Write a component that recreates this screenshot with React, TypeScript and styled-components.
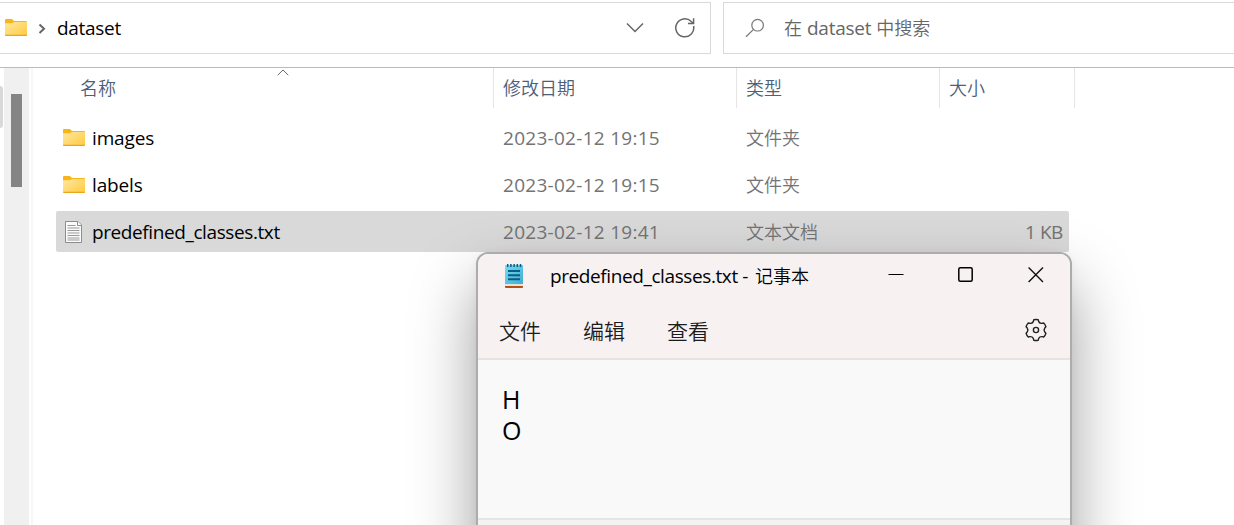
import type { ReactNode } from 'react';
import styled, { createGlobalStyle } from 'styled-components';

const files = [
  { name: 'images', date: '2023-02-12 19:15', type: '文件夹', size: '', folder: true },
  { name: 'labels', date: '2023-02-12 19:15', type: '文件夹', size: '', folder: true },
  { name: 'predefined_classes.txt', date: '2023-02-12 19:41', type: '文本文档', size: '1 KB', folder: false },
];

export default function App() {
  return (
    <>
      <GlobalStyle />
      <Explorer>
        <Toolbar>
          <AddressBar>
            <FolderIcon />
            <Crumb>
              <svg width="8" height="12" viewBox="0 0 8 12">
                <path d="M1.5 1.5 6 5.8 1.5 10" fill="none" stroke="#666" strokeWidth="2" />
              </svg>
            </Crumb>
            <Latin $spacing={-0.3}>dataset</Latin>
            <AddressActions>
              <svg width="18" height="12" viewBox="0 0 18 12">
                <path d="m1 1.5 8 8 8-8" fill="none" stroke="#666" strokeWidth="1.5" />
              </svg>
              <svg width="22" height="22" viewBox="0 0 22 22">
                <path
                  d="M19.6 9A9 9 0 1 1 17.2 4.5L19 6M19.6 1.3V6.5H14"
                  fill="none"
                  stroke="#666"
                  strokeWidth="1.5"
                />
              </svg>
            </AddressActions>
          </AddressBar>
          <SearchBox>
            <svg width="20" height="20" viewBox="0 0 20 20">
              <circle cx="12.6" cy="7.2" r="5.8" fill="none" stroke="#777" strokeWidth="1.2" />
              <path d="M8.6 11.4 1 18.8" stroke="#777" strokeWidth="1.2" />
            </svg>
            <SearchHint>
              <span>在</span>
              <Latin $spacing={-0.25}>dataset</Latin>
              <span>中搜索</span>
            </SearchHint>
          </SearchBox>
        </Toolbar>
        <Content>
          <NavEdge>
            <NavItem />
            <ScrollTrack>
              <ScrollThumb />
            </ScrollTrack>
          </NavEdge>
          <FileList>
            <HeaderRow>
              <HeaderCell $indent={47}>
                名称
                <SortMark width="12" height="7" viewBox="0 0 12 7">
                  <path d="M.7 6.2 6 1l5.3 5.2" fill="none" stroke="#666" />
                </SortMark>
              </HeaderCell>
              <HeaderCell $indent={9}>修改日期</HeaderCell>
              <HeaderCell $indent={9}>类型</HeaderCell>
              <HeaderCell $indent={9}>大小</HeaderCell>
            </HeaderRow>
            <Rows>
              {files.map((file) => (
                <FileRow key={file.name} $selected={!file.folder}>
                  <NameCell>
                    {file.folder ? <FolderIcon /> : <TextFileIcon />}
                    <Latin $spacing={file.folder ? -0.15 : -0.4}>{file.name}</Latin>
                  </NameCell>
                  <Latin $spacing={0.28}>{file.date}</Latin>
                  <TypeCell>{file.type}</TypeCell>
                  <SizeCell>
                    <Latin $spacing={-0.4}>{file.size}</Latin>
                  </SizeCell>
                </FileRow>
              ))}
            </Rows>
          </FileList>
        </Content>
        <Notepad title={<><Latin $spacing={-0.4}>predefined_classes.txt -</Latin><span>记事本</span></>} />
      </Explorer>
    </>
  );
}

function Notepad({ title }: { title: ReactNode }) {
  return (
    <Window>
      <TitleBar>
        <NotepadIcon />
        <Title>{title}</Title>
        <WindowButtons>
          <svg width="16" height="16" viewBox="0 0 16 16">
            <path d="M.5 7.5h15" stroke="#000" />
          </svg>
          <svg width="16" height="16" viewBox="0 0 16 16">
            <rect x=".8" y=".8" width="13.4" height="13.4" rx="1.5" fill="none" stroke="#000" strokeWidth="1.5" />
          </svg>
          <svg width="16" height="16" viewBox="0 0 16 16">
            <path d="m.6.6 14.4 14.4M15 .6.6 15" stroke="#111" strokeWidth="1.4" />
          </svg>
        </WindowButtons>
      </TitleBar>
      <MenuBar>
        <span>文件</span>
        <span>编辑</span>
        <span>查看</span>
        <GearIcon />
      </MenuBar>
      <Editor>
        <div>H</div>
        <div>O</div>
      </Editor>
      <StatusBar />
    </Window>
  );
}

function FolderIcon() {
  return (
    <svg width="22" height="18" viewBox="0 0 22 18">
      <defs>
        <linearGradient id="folder" x1="0" y1="0" x2="1" y2="1">
          <stop offset="0" stopColor="#ffe7a2" />
          <stop offset="1" stopColor="#ffcb3d" />
        </linearGradient>
      </defs>
      <path d="M0 1Q0 0 1 0H6.5Q7.3 0 8 1L9 2H21Q22 2 22 3V6H0Z" fill="#f8b517" />
      <path d="M0 4.3H7L9 3H22V16Q22 17 21 17H1Q0 17 0 16Z" fill="url(#folder)" />
      <path d="M0 15.8H22Q22 17 21 17H1Q0 17 0 15.8Z" fill="#e9a51c" />
    </svg>
  );
}

function TextFileIcon() {
  return (
    <svg width="22" height="22" viewBox="0 0 22 22">
      <path d="M2.5.5H15L18.5 4V21.5H2.5Z" fill="#fafafa" stroke="#8c8c8c" />
      <path d="M14.5.5V4.5H18.5" fill="#fff" stroke="#8c8c8c" />
      <path
        d="M4.5 4.5H12.5M4.5 7H16.5M4.5 9.5H16.5M4.5 12H16.5M4.5 14.5H16.5M4.5 17H16.5M4.5 19H16.5"
        stroke="#9a9a9a"
      />
    </svg>
  );
}

function NotepadIcon() {
  return (
    <svg width="20" height="26" viewBox="0 0 20 26">
      <defs>
        <linearGradient id="pad" x1="0" y1="0" x2="1" y2="1">
          <stop offset="0" stopColor="#76dcf5" />
          <stop offset="1" stopColor="#41acd2" />
        </linearGradient>
      </defs>
      <path d="M1 20H19V24Q19 25 18 25H2Q1 25 1 24Z" fill="#b5520f" />
      <path d="M1 20H19V23H1Z" fill="#e3e3e3" />
      <path d="M1 3Q1 2 2 2H18Q19 2 19 3V21H1Z" fill="url(#pad)" />
      <path d="M3.7 1V4M6.9 1V4M10.1 1V4M13.3 1V4M16.5 1V4" stroke="#075f83" strokeWidth="1.5" />
      <path d="M4 8H16M4 12.2H16M4 16.2H16" stroke="#075f83" strokeWidth="2" />
    </svg>
  );
}

function GearIcon() {
  return (
    <svg width="24" height="24" viewBox="-12 -12 24 24" fill="none" stroke="#222" strokeWidth="1.4">
      <path
        strokeLinejoin="round"
        d="M-2.2-10.2Q0-10.7 2.2-10.2L2.7-8.4Q3.7-6.4 6.1-6.6L7.7-7Q9.3-5.4 9.9-3.2L8.8-2Q7.4 0 8.8 2L9.9 3.2Q9.3 5.4 7.7 7L6.1 6.6Q3.7 6.4 2.7 8.4L2.2 10.2Q0 10.7-2.2 10.2L-2.7 8.4Q-3.7 6.4-6.1 6.6L-7.7 7Q-9.3 5.4-9.9 3.2L-8.8 2Q-7.4 0-8.8-2L-9.9-3.2Q-9.3-5.4-7.7-7L-6.1-6.6Q-3.7-6.4-2.7-8.4Z"
      />
      <circle r="2.6" />
    </svg>
  );
}

const GlobalStyle = createGlobalStyle`
  * {
    box-sizing: border-box;
  }

  body {
    margin: 0;
    overflow: hidden;
    background-color: #fff;
    font-family: 'Noto Sans CJK SC', sans-serif;
    font-weight: 350;
  }

  svg {
    display: block;
    flex-shrink: 0;
  }
`;

const Latin = styled.span<{ $spacing: number }>`
  font-family: 'Open Sans', 'Noto Sans CJK SC', sans-serif;
  font-size: 19px;
  font-weight: 400;
  letter-spacing: ${({ $spacing }) => $spacing}px;
  white-space: pre;
`;

const Explorer = styled.div`
  position: relative;
  width: 1234px;
  height: 525px;
  overflow: hidden;
`;

const Toolbar = styled.div`
  display: flex;
  gap: 12px;
  height: 68px;
  padding-top: 2px;
  border-bottom: 1px solid #bcbcbc;
`;

const AddressBar = styled.div`
  display: flex;
  align-items: center;
  width: 711px;
  height: 52px;
  padding-left: 5px;
  border: 1px solid #d9d9d9;
  border-left: none;
  color: #000;
`;

const Crumb = styled.div`
  margin: 2px 11px 0 11px;
`;

const AddressActions = styled.div`
  display: flex;
  align-items: center;
  gap: 30px;
  margin-left: auto;
  padding-right: 14px;
`;

const SearchBox = styled.div`
  display: flex;
  flex: 1;
  align-items: center;
  gap: 19px;
  height: 52px;
  padding-left: 21px;
  border: 1px solid #d9d9d9;
  border-right: none;
`;

const SearchHint = styled.div`
  display: flex;
  align-items: baseline;
  gap: 5px;
  padding-bottom: 2px;
  color: #666;
  font-size: 18px;
`;

const Content = styled.div`
  display: flex;
  height: 457px;
`;

const NavEdge = styled.div`
  display: flex;
  width: 33px;
  border-right: 2px solid #f7f7f7;
`;

const NavItem = styled.div`
  width: 3px;
  height: 42px;
  margin: 18px 1px 0 0;
  border-radius: 0 3px 3px 0;
  background-color: #d9d9d9;
`;

const ScrollTrack = styled.div`
  width: 25px;
  padding: 26px 7px 0;
  background-color: #f0f0f0;
`;

const ScrollThumb = styled.div`
  height: 93px;
  background-color: #858585;
`;

const FileList = styled.div`
  width: 1042px;
`;

const HeaderRow = styled.div`
  display: grid;
  grid-template-columns: 461px 243px 203px 135px;
  height: 40px;
`;

const HeaderCell = styled.div<{ $indent: number }>`
  position: relative;
  padding-left: ${({ $indent }) => $indent}px;
  border-right: 1px solid #e5e5e5;
  color: #4c607a;
  font-size: 18px;
  line-height: 38px;
`;

const SortMark = styled.svg`
  position: absolute;
  top: 1px;
  left: 244px;
`;

const Rows = styled.div`
  display: flex;
  flex-direction: column;
  gap: 6px;
  padding: 9px 6px 0 23px;
`;

const FileRow = styled.div<{ $selected: boolean }>`
  display: grid;
  grid-template-columns: 447px 243px 203px 1fr;
  align-items: center;
  height: 41px;
  border-radius: 2px;
  background-color: ${({ $selected }) => ($selected ? '#d9d9d9' : 'transparent')};
  color: #737373;
`;

const NameCell = styled.div`
  display: flex;
  align-items: center;
  gap: 7px;
  padding-left: 7px;
  color: #000;
`;

const TypeCell = styled.div`
  padding-bottom: 2px;
  font-size: 18px;
`;

const SizeCell = styled.div`
  padding-right: 6px;
  text-align: right;
`;

const Window = styled.div`
  position: absolute;
  top: 252px;
  left: 476px;
  width: 596px;
  height: 330px;
  border: 2px solid #acacac;
  border-radius: 12px;
  background-color: #f9f9f9;
  box-shadow: 0 32px 64px rgba(0, 0, 0, 0.38), 0 2px 10px rgba(0, 0, 0, 0.05);
  overflow: hidden;
`;

const TitleBar = styled.div`
  display: flex;
  align-items: center;
  height: 46px;
  padding: 0 26px 2px;
  background-color: #f7f1f1;
`;

const Title = styled.div`
  display: flex;
  align-items: baseline;
  gap: 7px;
  margin-left: 26px;
  padding-bottom: 2px;
  color: #000;
  font-size: 18px;
`;

const WindowButtons = styled.div`
  display: flex;
  gap: 54px;
  margin: 0 0 2px auto;
`;

const MenuBar = styled.div`
  display: flex;
  align-items: center;
  gap: 42px;
  height: 60px;
  padding: 2px 22px 0 21px;
  border-bottom: 2px solid #e7e3e3;
  background-color: #f7f1f1;
  color: #1c1c1c;
  font-size: 21px;

  svg {
    margin-left: auto;
  }
`;

const Editor = styled.div`
  height: 158px;
  padding: 24px;
  color: #000;
  font-family: 'Open Sans', sans-serif;
  font-size: 25px;
  font-weight: 400;
  line-height: 31px;
`;

const StatusBar = styled.div`
  height: 62px;
  border-top: 2px solid #e5e5e5;
  background-color: #f3f3f3;
`;
